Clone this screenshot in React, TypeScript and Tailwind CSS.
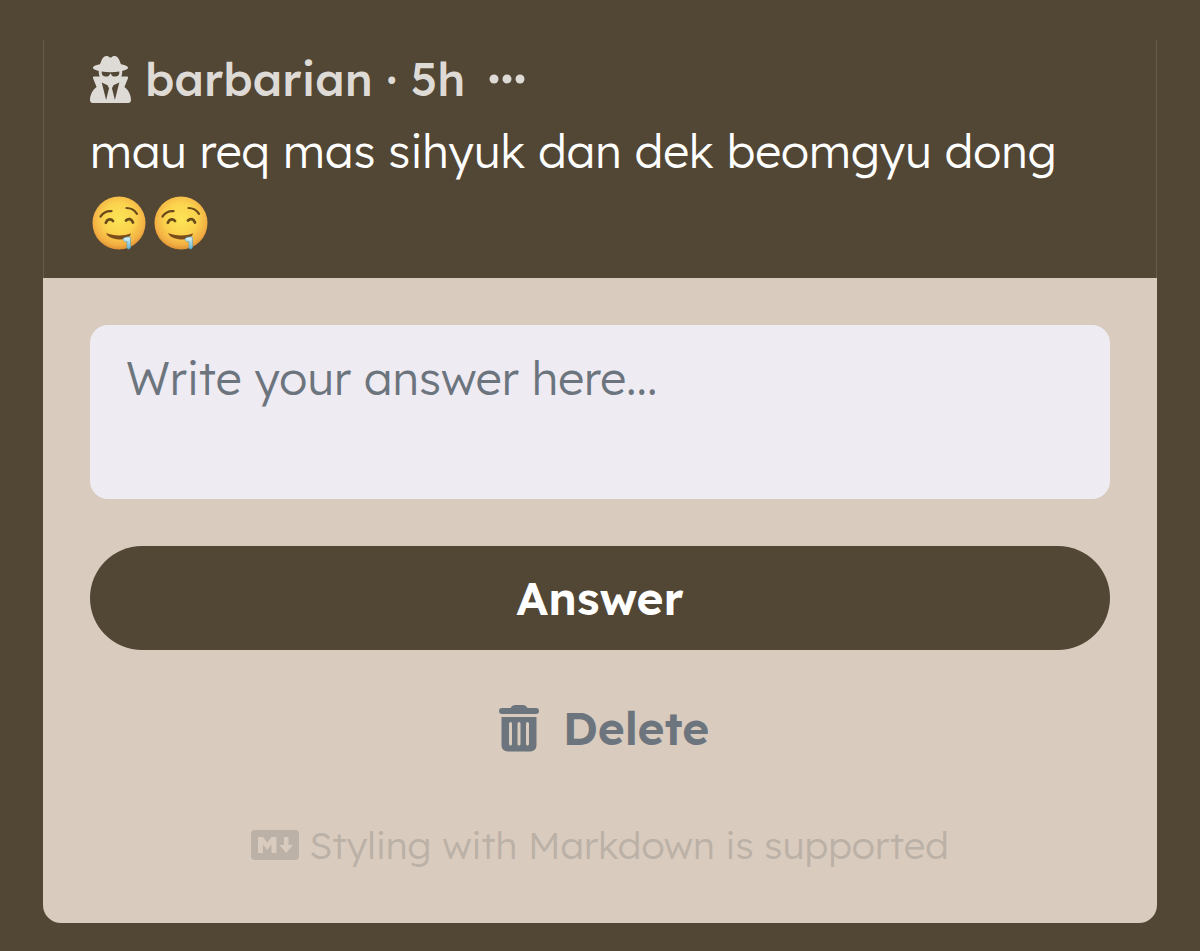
import { useState } from "react";
import { FaUserSecret } from "react-icons/fa6";

function DroolingFace() {
  return (
    <svg viewBox="0 0 54 54" className="size-[54px]" role="img" aria-label="drooling face">
      <defs>
        <radialGradient id="face" cx="50%" cy="42%" r="60%">
          <stop offset="0" stopColor="#fde456" />
          <stop offset="0.5" stopColor="#fbd34e" />
          <stop offset="0.82" stopColor="#f3b043" />
          <stop offset="1" stopColor="#d98a30" />
        </radialGradient>
        <linearGradient id="drool" x1="0" y1="0" x2="0" y2="1">
          <stop offset="0" stopColor="#e2f4f6" />
          <stop offset="1" stopColor="#62b4d4" />
        </linearGradient>
      </defs>
      <circle cx="27" cy="27" r="26.5" fill="url(#face)" />
      <g fill="none" stroke="#694a1b" strokeLinecap="round">
        <path d="M8.5 20.5C11.5 16.2 15 14.8 19.5 15.2" strokeWidth="2.2" />
        <path d="M34.5 12C39 12 42.5 14 45 17.8" strokeWidth="2.2" />
        <path d="M13.8 26.8C15.5 22.8 19 22.5 21 25" strokeWidth="2.8" />
        <path d="M34 24.5C36.5 22 39.5 22.8 41 26.5" strokeWidth="2.8" />
      </g>
      <path d="M14.2 37C20 39.8 31 40.6 39 37.6C38 42 32.5 43.8 27 43.4C20.5 43 15.5 41 14.2 37Z" fill="#7a4d1b" />
      <path d="M30.8 43C32.5 41 36 40.4 38.4 41.4V51C38.4 53.6 35 53.6 35 51V45.5C33.5 46 31.5 45.2 30.8 43Z" fill="url(#drool)" stroke="#5aa7c4" strokeWidth="0.7" />
    </svg>
  );
}

function TrashIcon() {
  return (
    <svg viewBox="0 0 40 47" className="h-[47px] w-10" fill="currentColor" aria-hidden="true">
      <path d="M3 3H11.5C13 0.8 14.3 0 16 0H24C25.7 0 27 0.8 28.5 3H37A3 3 0 0 1 37 9H3A3 3 0 0 1 3 3Z" />
      <path
        fillRule="evenodd"
        d="M2.5 12H37.5V40.5A6 6 0 0 1 31.5 46.5H8.5A6 6 0 0 1 2.5 40.5ZM11.5 17A1.5 1.5 0 0 0 10 18.5V39A1.5 1.5 0 0 0 13 39V18.5A1.5 1.5 0 0 0 11.5 17ZM20 17A1.5 1.5 0 0 0 18.5 18.5V39A1.5 1.5 0 0 0 21.5 39V18.5A1.5 1.5 0 0 0 20 17ZM28.5 17A1.5 1.5 0 0 0 27 18.5V39A1.5 1.5 0 0 0 30 39V18.5A1.5 1.5 0 0 0 28.5 17Z"
      />
    </svg>
  );
}

function MarkdownIcon() {
  return (
    <svg viewBox="0 0 48 30" className="h-[30px] w-12" aria-hidden="true">
      <rect width="48" height="30" rx="4" fill="currentColor" />
      <path d="M7 23V7H12L16.2 12.5L20.5 7H25.5V23H20.5V14.5L16.2 20L12 14.5V23Z" fill="#d9cbbd" />
      <path d="M33 7H37.5V15H42L35.2 23L28.5 15H33Z" fill="#d9cbbd" />
    </svg>
  );
}

export default function App() {
  const [answer, setAnswer] = useState("");

  return (
    <main className="min-h-screen bg-[#524635] px-[43px] pt-10 pb-7 font-['Lexend','Inter',sans-serif] text-[46px]">
      <article>
        <header className="border-x border-[#665b4c] px-[46px] pt-1 pb-6 text-white">
          <div className="flex h-[70px] items-center font-medium text-[#dedad5]">
            <FaUserSecret className="mr-3.5 h-[47px] w-[41px]" />
            <span>barbarian · 5h</span>
            <button type="button" aria-label="More options" className="ml-6">
              <svg viewBox="0 0 36 10" className="h-[10px] w-9" fill="currentColor">
                <circle cx="5" cy="5" r="4.5" />
                <circle cx="18" cy="5" r="4.5" />
                <circle cx="31" cy="5" r="4.5" />
              </svg>
            </button>
          </div>
          <p className="mt-0.5 leading-[70px] font-light">mau req mas sihyuk dan dek beomgyu dong</p>
          <div className="flex h-[68px] items-end gap-2 pb-1 pl-[2px]">
            <DroolingFace />
            <DroolingFace />
          </div>
        </header>

        <form
          className="flex flex-col rounded-b-[18px] bg-[#d9cbbd] px-[47px] pt-[47px] pb-12"
          onSubmit={(e) => e.preventDefault()}
        >
          <textarea
            value={answer}
            onChange={(e) => setAnswer(e.target.value)}
            aria-label="Your answer"
            placeholder="Write your answer here..."
            className="h-[174px] resize-none rounded-[18px] bg-[#efebf3] px-9 py-[18px] leading-[70px] font-light text-[#524635] outline-none placeholder:text-[#6c757d]"
          />
          <button type="submit" className="mt-[47px] h-[104px] rounded-full bg-[#524635] font-semibold text-white">
            Answer
          </button>
          <button type="button" className="mt-[26px] flex h-[104px] items-center justify-center gap-6 pl-2 font-semibold text-[#6c757d]">
            <TrashIcon />
            Delete
          </button>
          <p className="mt-[35px] flex h-[60px] items-center justify-center gap-[10px] text-[38px] font-light text-[#bbb1a7]">
            <MarkdownIcon />
            Styling with Markdown is supported
          </p>
        </form>
      </article>
    </main>
  );
}
